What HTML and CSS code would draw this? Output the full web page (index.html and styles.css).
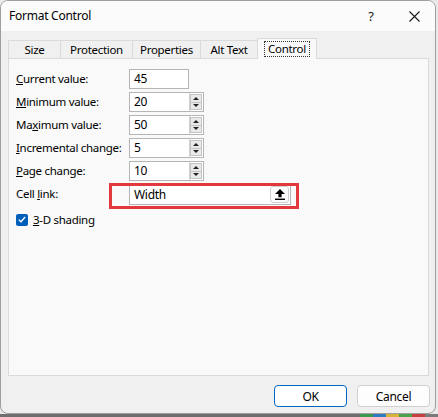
FILE: index.html
```html
<!DOCTYPE html>
<html>
<head>
<meta charset="utf-8">
<link rel="stylesheet" href="styles.css">
</head>
<body>
<div class="desk">
  <div class="dialog">
    <div class="titlebar">
      <span class="title">Format Control</span>
      <span class="help">?</span>
      <span class="close"><svg width="11" height="11" viewBox="0 0 11 11"><path d="M0.5 0.5 L10.5 10.5 M10.5 0.5 L0.5 10.5" stroke="#1a1a1a" stroke-width="1.1" fill="none"/></svg></span>
    </div>
    <div class="tabs">
      <div class="tab t-size">Size</div>
      <div class="tab t-prot">Protection</div>
      <div class="tab t-prop">Properties</div>
      <div class="tab t-alt">Alt Text</div>
      <div class="tab t-ctrl active"><span class="focus">Control</span></div>
    </div>
    <div class="panel">
      <div class="form">
        <div class="lbl"><u>C</u>urrent value:</div>
        <div class="field plain"><span class="val">45</span></div>

        <div class="lbl"><u>M</u>inimum value:</div>
        <div class="field spin"><span class="val">20</span><span class="spinner"><span class="up"></span><span class="down"></span></span></div>

        <div class="lbl">Ma<u>x</u>imum value:</div>
        <div class="field spin"><span class="val">50</span><span class="spinner"><span class="up"></span><span class="down"></span></span></div>

        <div class="lbl"><u>I</u>ncremental change:</div>
        <div class="field spin"><span class="val">5</span><span class="spinner"><span class="up"></span><span class="down"></span></span></div>

        <div class="lbl"><u>P</u>age change:</div>
        <div class="field spin"><span class="val">10</span><span class="spinner"><span class="up"></span><span class="down"></span></span></div>

        <div class="lbl">Cell <u>l</u>ink:</div>
        <div class="field link"><span class="val">Width</span><span class="pick"><svg width="10" height="11" viewBox="0 0 10 11"><path d="M5 0 L10 5 L6.6 5 L6.6 8.2 L3.4 8.2 L3.4 5 L0 5 Z" fill="#000"/><rect x="0" y="9.6" width="10" height="1.4" fill="#000"/></svg></span><span class="mark"></span></div>
      </div>
      <div class="check">
        <span class="box"><svg width="8" height="7" viewBox="0 0 8 7"><path d="M0.8 3.6 L3 5.8 L7.2 1" stroke="#fff" stroke-width="1.3" fill="none"/></svg></span>
        <span><u>3</u>-D shading</span>
      </div>
    </div>
    <div class="footer">
      <button class="btn ok">OK</button>
      <button class="btn">Cancel</button>
    </div>
  </div>
  <div class="taskbar">
    <span class="seg g1"></span><span class="seg g2"></span><span class="seg g3"></span><span class="seg g4"></span><span class="seg g5"></span><span class="seg g6"></span>
  </div>
</div>
</body>
</html>
```
FILE: styles.css
```css
* { box-sizing: border-box; }
body {
  margin: 0;
  font-family: "Noto Sans", "Segoe UI", sans-serif;
  font-size: 11.5px;
  letter-spacing: -0.3px;
  color: #000;
  background: #e6e6e6;
}
.desk {
  width: 438px;
  height: 417px;
  background: #e9e9e9;
  display: flex;
  flex-direction: column;
  overflow: hidden;
}
.dialog {
  width: 436px;
  height: 414px;
  border: 1px solid #9e9e9e;
  border-radius: 8px;
  background: #f0f0f0;
  display: flex;
  flex-direction: column;
  overflow: hidden;
  flex: none;
}
.titlebar {
  height: 30px;
  background: #fbfbfb;
  display: flex;
  align-items: center;
  padding-left: 8px;
  flex: none;
}
.title { flex: 1; padding-bottom: 1px; font-size: 12px; letter-spacing: -0.25px; }
.help { width: 16px; text-align: center; font-size: 13px; margin-right: 30px; color: #1a1a1a; }
.close { width: 11px; height: 11px; display: flex; margin-right: 15px; }
.tabs {
  height: 27px;
  display: flex;
  align-items: flex-end;
  padding-left: 7px;
  flex: none;
  position: relative;
  z-index: 1;
}
.tab {
  height: 18px;
  border: 1px solid #dadada;
  border-bottom: none;
  margin-right: -1px;
  display: flex;
  align-items: center;
  justify-content: center;
  background: #f0f0f0;
  padding-bottom: 1px;
  white-space: nowrap;
}
.t-size { width: 53px; }
.t-prot { width: 73px; }
.t-prop { width: 69px; }
.t-alt { width: 58px; }
.t-ctrl { width: 60px; }
.tab.active {
  height: 21px;
  background: #f9f9f9;
  margin-bottom: -1px;
  padding-bottom: 0;
}
.focus {
  border: 1px dotted #333;
  padding: 0 3px;
  line-height: 14px;
}
.panel {
  margin-left: 7px;
  width: 421px;
  height: 318px;
  border: 1px solid #dadada;
  background: #f9f9f9;
  padding: 10px 7px;
  flex: none;
}
.form {
  display: grid;
  grid-template-columns: 113px auto;
  grid-auto-rows: 20px;
  row-gap: 3px;
  align-items: center;
}
.lbl { line-height: 20px; white-space: nowrap; }
.field {
  height: 20px;
  border: 1px solid #b5b5b5;
  background: #fff;
  display: flex;
  align-items: center;
  position: relative;
}
.val { flex: 1; padding-left: 4px; line-height: 18px; font-size: 12px; }
.plain { width: 60px; }
.spin { width: 75px; }
.spinner {
  width: 14px;
  height: 18px;
  display: flex;
  flex-direction: column;
  border-left: 1px solid #d0d0d0;
  padding: 1px 1px 1px 0;
}
.spinner span {
  flex: 1;
  background: #e9e9e9;
  border: 1px solid #c4c4c4;
  display: flex;
  align-items: center;
  justify-content: center;
}
.spinner span + span { border-top: none; }
.up::before {
  content: "";
  border-left: 3px solid transparent;
  border-right: 3px solid transparent;
  border-bottom: 3px solid #222;
}
.down::before {
  content: "";
  border-left: 3px solid transparent;
  border-right: 3px solid transparent;
  border-top: 3px solid #222;
}
.link { width: 162px; margin-top: 1px; }
.pick {
  width: 19px;
  height: 17px;
  margin-right: 1px;
  border: 1px solid #d0d0d0;
  border-radius: 3px;
  background: #fdfdfd;
  display: flex;
  align-items: center;
  justify-content: center;
}
.mark {
  position: absolute;
  left: -21px;
  top: -3px;
  width: 190px;
  height: 26px;
  border: 3px solid #e2393f;
}
.check {
  display: flex;
  align-items: center;
  gap: 5px;
  margin-top: 8px;
}
.box {
  width: 12px;
  height: 12px;
  border-radius: 2px;
  background: #005fb8;
  display: flex;
  align-items: center;
  justify-content: center;
}
.footer {
  flex: 1;
  display: flex;
  justify-content: flex-end;
  align-items: flex-start;
  gap: 10px;
  padding: 9px 5px 0 0;
}
.btn {
  width: 73px;
  height: 22px;
  border: 1px solid #d0d0d0;
  border-radius: 4px;
  background: #fdfdfd;
  font-family: "Noto Sans", "Segoe UI", sans-serif;
  font-size: 12px;
  letter-spacing: -0.3px;
  color: #000;
  padding: 0;
}
.btn.ok { border-color: #0067c0; background: #fff; }
.taskbar {
  flex: 1;
  display: flex;
  background: #6e6e6e;
  padding-left: 360px;
}
.seg { flex: 1; }
.g1 { background: #3b9a4f; }
.g2 { background: #2f7bbf; }
.g3 { background: #d6b33a; }
.g4 { background: #4aa24a; }
.g5 { background: #c73e3e; }
.g6 { background: #7a7a7a; }
```
